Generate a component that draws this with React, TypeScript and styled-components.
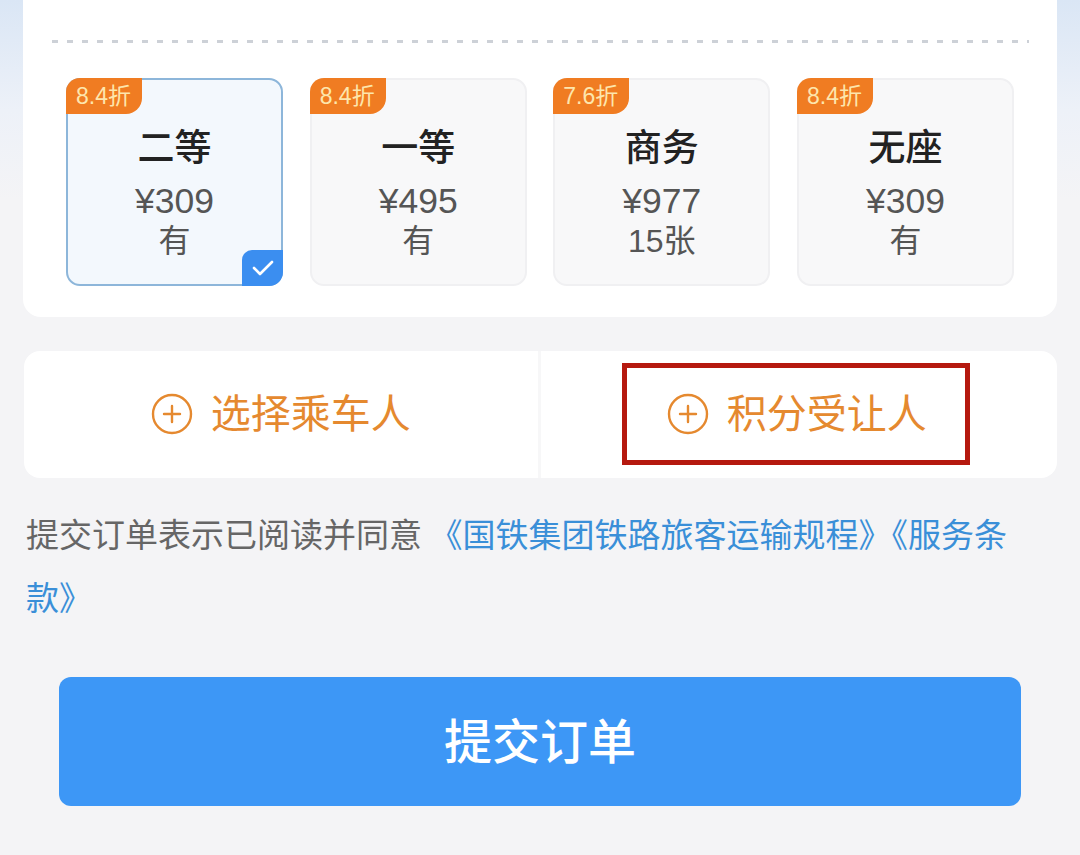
import React from 'react';
import styled, { createGlobalStyle } from 'styled-components';

const GlobalStyle = createGlobalStyle`
    html, body {
        margin: 0;
        padding: 0;
        background: #f4f4f6;
    }
    * {
        box-sizing: border-box;
    }
`;

const fontStack = `"Liberation Sans", "Noto Sans CJK SC", sans-serif`;

const Page = styled.div`
    width: 1080px;
    height: 855px;
    overflow: hidden;
    font-family: ${fontStack};
    background: linear-gradient(180deg, #dae6f5 0px, #edf1f8 110px, #f4f4f6 200px);
`;

const SeatPanel = styled.div`
    margin: 0 23px;
    background: #ffffff;
    border-radius: 0 0 18px 18px;
    padding: 40px 43px 31px 43px;
`;

const DashedLine = styled.div`
    height: 2.5px;
    margin: 0 -15px 0 -14px;
    background: repeating-linear-gradient(90deg, #cdd1d7 0 6px, transparent 6px 15px);
`;

const SeatRow = styled.div`
    margin-top: 35px;
    display: grid;
    grid-template-columns: repeat(4, 217px);
    justify-content: space-between;
`;

const SeatCard = styled.div<{ $active?: boolean }>`
    position: relative;
    height: 208px;
    border-radius: 14px;
    border: 2px solid ${(p) => (p.$active ? '#8db6da' : '#f0f0f2')};
    background: ${(p) => (p.$active ? '#f3f8fd' : '#f8f8f9')};
    display: flex;
    flex-direction: column;
    align-items: center;
    padding-top: 47px;
    color: #555555;
`;

const Badge = styled.div`
    position: absolute;
    top: -2px;
    left: -2px;
    height: 36px;
    padding: 0 11px 0 10px;
    background: #f07c22;
    color: #fde6ad;
    font-size: 23px;
    line-height: 36px;
    border-radius: 14px 0 16px 0;
`;

const SeatName = styled.div`
    font-size: 37px;
    line-height: 44px;
    font-weight: 500;
    color: #222222;
`;

const SeatPrice = styled.div`
    margin-top: 10px;
    font-size: 35.5px;
    line-height: 40px;
`;

const SeatStock = styled.div`
    font-size: 32px;
    line-height: 40px;
`;

const CheckCorner = styled.div`
    position: absolute;
    right: -2px;
    bottom: -2px;
    width: 41px;
    height: 36px;
    background: #3b8ef0;
    border-radius: 10px 0 14px 0;
    display: flex;
    align-items: center;
    justify-content: center;
`;

const PassengerPanel = styled.div`
    margin: 34px 23px 0 24px;
    height: 127px;
    background: #ffffff;
    border-radius: 16px;
    display: grid;
    grid-template-columns: 1fr 1fr;
    overflow: hidden;
`;

const PassengerCell = styled.div<{ $divider?: boolean }>`
    display: flex;
    align-items: center;
    justify-content: center;
    border-right: ${(p) => (p.$divider ? '3px solid #f7f7f8' : 'none')};
`;

const AddButton = styled.div<{ $highlight?: boolean }>`
    display: flex;
    align-items: center;
    gap: 18px;
    color: #e5892f;
    font-size: 40px;
    line-height: 48px;
    padding: ${(p) => (p.$highlight ? '22px 38px 22px 40px' : '0')};
    border: ${(p) => (p.$highlight ? '5px solid #b5190f' : 'none')};
    margin-right: ${(p) => (p.$highlight ? '6px' : '0')};
`;

const Terms = styled.p`
    margin: 24px 28px 0 26px;
    font-size: 33px;
    line-height: 63px;
    color: #666666;
    word-break: break-all;
    font-family: "Noto Sans CJK SC", sans-serif;
`;

const TermsLink = styled.span`
    color: #3a8fd8;
`;

const SubmitButton = styled.div`
    margin: 49px 59px 0 59px;
    height: 129px;
    padding-bottom: 6px;
    border-radius: 12px;
    background: #3d97f6;
    color: #ffffff;
    font-size: 48px;
    font-weight: 500;
    display: flex;
    align-items: center;
    justify-content: center;
    font-family: "Noto Sans CJK SC", sans-serif;
`;

const PlusIcon = () => (
    <svg width="42" height="42" viewBox="0 0 42 42">
        <circle cx="21" cy="21" r="19" fill="none" stroke="#e5892f" strokeWidth="2.4" />
        <path d="M21 13v16M13 21h16" stroke="#e5892f" strokeWidth="2.4" strokeLinecap="round" />
    </svg>
);

const seats = [
    { discount: '8.4折', name: '二等', price: '¥309', stock: '有', active: true },
    { discount: '8.4折', name: '一等', price: '¥495', stock: '有' },
    { discount: '7.6折', name: '商务', price: '¥977', stock: '15张' },
    { discount: '8.4折', name: '无座', price: '¥309', stock: '有' },
];

export default function App() {
    return (
        <Page>
            <GlobalStyle />
            <SeatPanel>
                <DashedLine />
                <SeatRow>
                    {seats.map((s) => (
                        <SeatCard key={s.name} $active={s.active}>
                            <Badge>{s.discount}</Badge>
                            <SeatName>{s.name}</SeatName>
                            <SeatPrice>{s.price}</SeatPrice>
                            <SeatStock>{s.stock}</SeatStock>
                            {s.active && (
                                <CheckCorner>
                                    <svg width="24" height="18" viewBox="0 0 24 18">
                                        <path
                                            d="M3 9l6 6L21 3"
                                            fill="none"
                                            stroke="#ffffff"
                                            strokeWidth="2.6"
                                            strokeLinecap="round"
                                            strokeLinejoin="round"
                                        />
                                    </svg>
                                </CheckCorner>
                            )}
                        </SeatCard>
                    ))}
                </SeatRow>
            </SeatPanel>

            <PassengerPanel>
                <PassengerCell $divider>
                    <AddButton>
                        <PlusIcon />
                        选择乘车人
                    </AddButton>
                </PassengerCell>
                <PassengerCell>
                    <AddButton $highlight>
                        <PlusIcon />
                        积分受让人
                    </AddButton>
                </PassengerCell>
            </PassengerPanel>

            <Terms>
                提交订单表示已阅读并同意 <TermsLink>《国铁集团铁路旅客运输规程》《服务条款》</TermsLink>
            </Terms>

            <SubmitButton>提交订单</SubmitButton>
        </Page>
    );
}
